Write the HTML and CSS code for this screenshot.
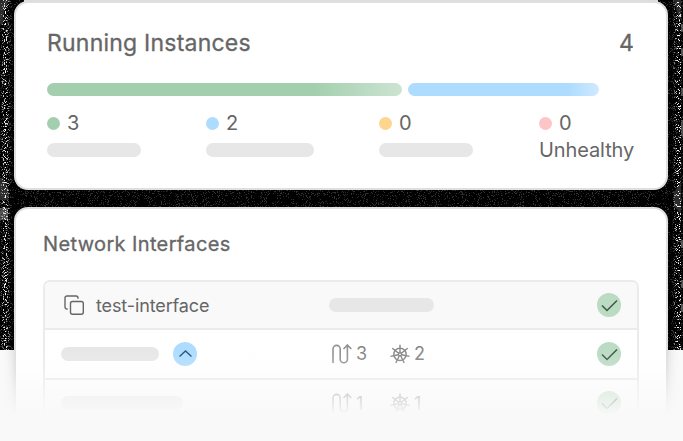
FILE: index.html
```html
<!DOCTYPE html>
<html lang="en">
<head>
<meta charset="utf-8">
<title>Running Instances</title>
<link rel="stylesheet" href="styles.css">
</head>
<body>
<svg class="symbols" width="0" height="0">
  <symbol id="check" viewBox="0 0 24 24"><path d="M5 12.5l5 5L20 7.5" fill="none" stroke="#3f5547" stroke-width="1.5"/></symbol>
  <symbol id="route" viewBox="0 0 20 20"><path d="M1 19V5a3.6 3.6 0 0 1 7.2 0v10.2a3.6 3.6 0 0 0 7.2 0V1.5M11.5 5l3.9-4 3.9 4" fill="none" stroke="#919191" stroke-width="1.6"/></symbol>
  <symbol id="helm" viewBox="0 0 20 20"><g fill="none" stroke="#858585" stroke-width="1.4"><circle cx="10" cy="10.3" r="6.2"/><circle cx="10" cy="10.3" r="1.6"/><path d="M10 8.7V.8M11.3 9.3l6.4-5M11.6 10.7l7.9 1.7M10.7 11.8l3.5 7.2M9.3 11.8l-3.5 7.2M8.4 10.7L.5 12.4M8.7 9.3l-6.4-5"/></g></symbol>
</svg>
<svg class="backdrop" width="683" height="350" viewBox="0 0 683 350">
  <defs>
    <filter id="fine" x="0" y="0" width="100%" height="100%" color-interpolation-filters="sRGB">
      <feTurbulence type="fractalNoise" baseFrequency="0.93" numOctaves="2" seed="4"/>
      <feColorMatrix values="0 0 0 0 .2  0 0 0 0 .2  0 0 0 0 .2  14 0 0 0 -8.3"/>
    </filter>
    <filter id="bright" x="0" y="0" width="100%" height="100%" color-interpolation-filters="sRGB">
      <feTurbulence type="fractalNoise" baseFrequency="0.91" numOctaves="2" seed="9"/>
      <feColorMatrix values="0 0 0 0 1  0 0 0 0 1  0 0 0 0 1  0 24 0 0 -14.3"/>
    </filter>
    <linearGradient id="edge">
      <stop offset="0" stop-color="#000"/><stop offset=".004" stop-color="#aaa"/><stop offset=".008" stop-color="#fff"/><stop offset=".018" stop-color="#000"/>
      <stop offset=".984" stop-color="#000"/><stop offset=".992" stop-color="#fff"/><stop offset=".996" stop-color="#fff"/><stop offset=".998" stop-color="#000"/>
    </linearGradient>
    <mask id="edges"><rect width="683" height="350" fill="url(#edge)"/></mask>
  </defs>
  <rect width="683" height="350"/>
  <path fill="#2b2b2b" d="M0 0h9L4 12 3 24H0zM0 178h3l5 10v12H0zM674 0h7v20l-4-8zM681 182v32l-7-8v-14z"/>
  <path fill="#555" d="M0 208h8v12H0zM681 24h2v8h-2zM681 48h2v8h-2zM681 88h2v8h-2zM681 120h2v16h-2zM681 240h2v8h-2zM681 280h2v8h-2zM681 304h2v8h-2z"/>
  <rect width="683" height="350" filter="url(#fine)"/>
  <g mask="url(#edges)"><rect width="683" height="350" filter="url(#bright)"/></g>
  <path fill="#dcdddc" d="M24 0h634v2H24z"/>
</svg>
<main class="stack">
  <section class="card summary">
    <header class="summary-head"><h1>Running Instances</h1><strong>4</strong></header>
    <div class="bars"><i class="bar green-bar"></i><i class="bar blue-bar"></i></div>
    <div class="stats">
      <div class="stat"><p><i class="dot green"></i>3</p><i class="pill"></i></div>
      <div class="stat"><p><i class="dot blue"></i>2</p><i class="pill wide"></i></div>
      <div class="stat"><p><i class="dot orange"></i>0</p><i class="pill"></i></div>
      <div class="stat"><p><i class="dot red"></i>0</p><span>Unhealthy</span></div>
    </div>
  </section>
  <section class="card network">
    <h2>Network Interfaces</h2>
    <div class="table">
      <div class="row head">
        <div class="name"><svg class="copy" viewBox="0 0 20 20" fill="none" stroke="#666" stroke-width="1.4"><rect x="6.5" y="6.5" width="12.8" height="12.8" rx="2"/><path d="M3.7 14H3a2 2 0 0 1-2-2V3a2 2 0 0 1 2-2h9a2 2 0 0 1 2 2v.7"/></svg>test-interface</div>
        <div class="metrics"><i class="pill metric-pill"></i></div>
        <div class="status"><svg><use href="#check"/></svg></div>
      </div>
      <div class="row">
        <div class="name"><i class="pill name-pill"></i><span class="toggle"><svg viewBox="0 0 24 24"><path d="M6.5 14.5L12.5 9l6 5.5" fill="none" stroke="#215782" stroke-width="1.5"/></svg></span></div>
        <div class="metrics"><svg><use href="#route"/></svg><span>3</span><svg><use href="#helm"/></svg><span>2</span></div>
        <div class="status"><svg><use href="#check"/></svg></div>
      </div>
      <div class="row">
        <div class="name"><i class="pill long-pill"></i></div>
        <div class="metrics"><svg><use href="#route"/></svg><span>1</span><svg><use href="#helm"/></svg><span>1</span></div>
        <div class="status"><svg><use href="#check"/></svg></div>
      </div>
    </div>
  </section>
</main>
<div class="fade"></div>
</body>
</html>
```
FILE: styles.css
```css
* { box-sizing: border-box; }
body {
  margin: 0;
  width: 683px;
  height: 441px;
  overflow: hidden;
  position: relative;
  background: #f9f9f9;
  color: #666;
  font-family: Inter, "Liberation Sans", sans-serif;
}
h1, h2, p { margin: 0; font-weight: 400; }
i { display: block; flex: none; }
svg { display: block; flex: none; }
.symbols { position: absolute; }
.backdrop { position: absolute; top: 0; left: 0; }
.stack {
  position: relative;
  height: 416px;
  padding: 1px 15px 0 14px;
  display: flex;
  flex-direction: column;
  gap: 17px;
  overflow: hidden;
}
.card { background: #fff; border: 2px solid #dedfde; border-radius: 14px; flex: none; }
.summary { height: 189px; padding: 24px 32px 0 31px; }
.summary-head { display: flex; justify-content: space-between; height: 32px; line-height: 32px; }
h1, strong { font-size: 23px; font-weight: 400; letter-spacing: .22px; -webkit-text-stroke: .3px #666; }
.bars { display: flex; gap: 6px; margin-top: 24px; }
.bar { height: 13px; border-radius: 7px; }
.green-bar { width: 355px; background: linear-gradient(90deg, #a3cfae 75%, #cce4d1); }
.blue-bar { width: 191px; background: linear-gradient(90deg, #aedcfe 84%, #d0e9fe); }
.stats { display: flex; margin-top: 14px; font-size: 20px; line-height: 26px; }
.stat { width: 159px; flex: none; }
.stat:nth-child(2) { width: 173px; }
.stat:nth-child(3) { width: 160px; }
.stat:last-child { width: 95px; }
.stat p { display: flex; align-items: center; gap: 7px; height: 26px; font-weight: 400; }
.stat > .pill { margin-top: 7px; }
.stat span { display: block; line-height: 29px; letter-spacing: -.1px; }
.dot { width: 13px; height: 13px; border-radius: 50%; }
.green { background: #a3cfae; }
.blue { background: #aedcfe; }
.orange { background: #fdd58e; }
.red { background: #fdc5c5; }
.pill { width: 94px; height: 14px; border-radius: 7px; background: #e7e7e7; }
.wide { width: 108px; }
.network { height: 260px; padding: 21px 27px 0; box-shadow: 0 7px 11px rgba(0, 0, 0, .16); }
h2 { font-size: 20px; line-height: 28px; letter-spacing: .37px; -webkit-text-stroke: .3px #666; }
.table { margin-top: 22px; border: 2px solid #ebebeb; border-radius: 7px; overflow: hidden; height: 200px; }
.row { display: grid; grid-template-columns: 285px 1fr 44px; align-items: center; height: 49.5px; border-bottom: 2px solid #ebebeb; font-size: 18px; }
.head { background: #f9f9f9; height: 48px; }
.name { display: flex; align-items: center; padding-left: 16px; letter-spacing: -.12px; }
.copy { width: 20px; height: 20px; margin: 0 12px 0 3px; }
.name-pill { width: 98px; }
.long-pill { width: 122px; }
.metric-pill { width: 105px; margin-left: -1px; }
.toggle { width: 24px; height: 24px; margin-left: 14px; border-radius: 50%; background: #aedcfe; }
.toggle svg { width: 24px; height: 24px; }
.metrics { display: flex; align-items: center; color: #858585; }
.row:not(.head) .metrics { padding-left: 2px; }
.metrics svg { width: 20px; height: 20px; }
.metrics span { width: 35px; padding-left: 4px; }
.row:not(.head) .metrics svg:nth-of-type(2) { margin-left: 3px; }
.status svg { width: 24px; height: 24px; margin-left: 4px; border-radius: 50%; background: #bbdbc3; }
.fade {
  position: absolute;
  left: 0;
  top: 350px;
  width: 683px;
  height: 66px;
  background: linear-gradient(180deg, rgba(249, 249, 249, 0) 0, rgba(249, 249, 249, .2) 30%, rgba(249, 249, 249, .62) 62%, #f9f9f9 100%);
}
```
